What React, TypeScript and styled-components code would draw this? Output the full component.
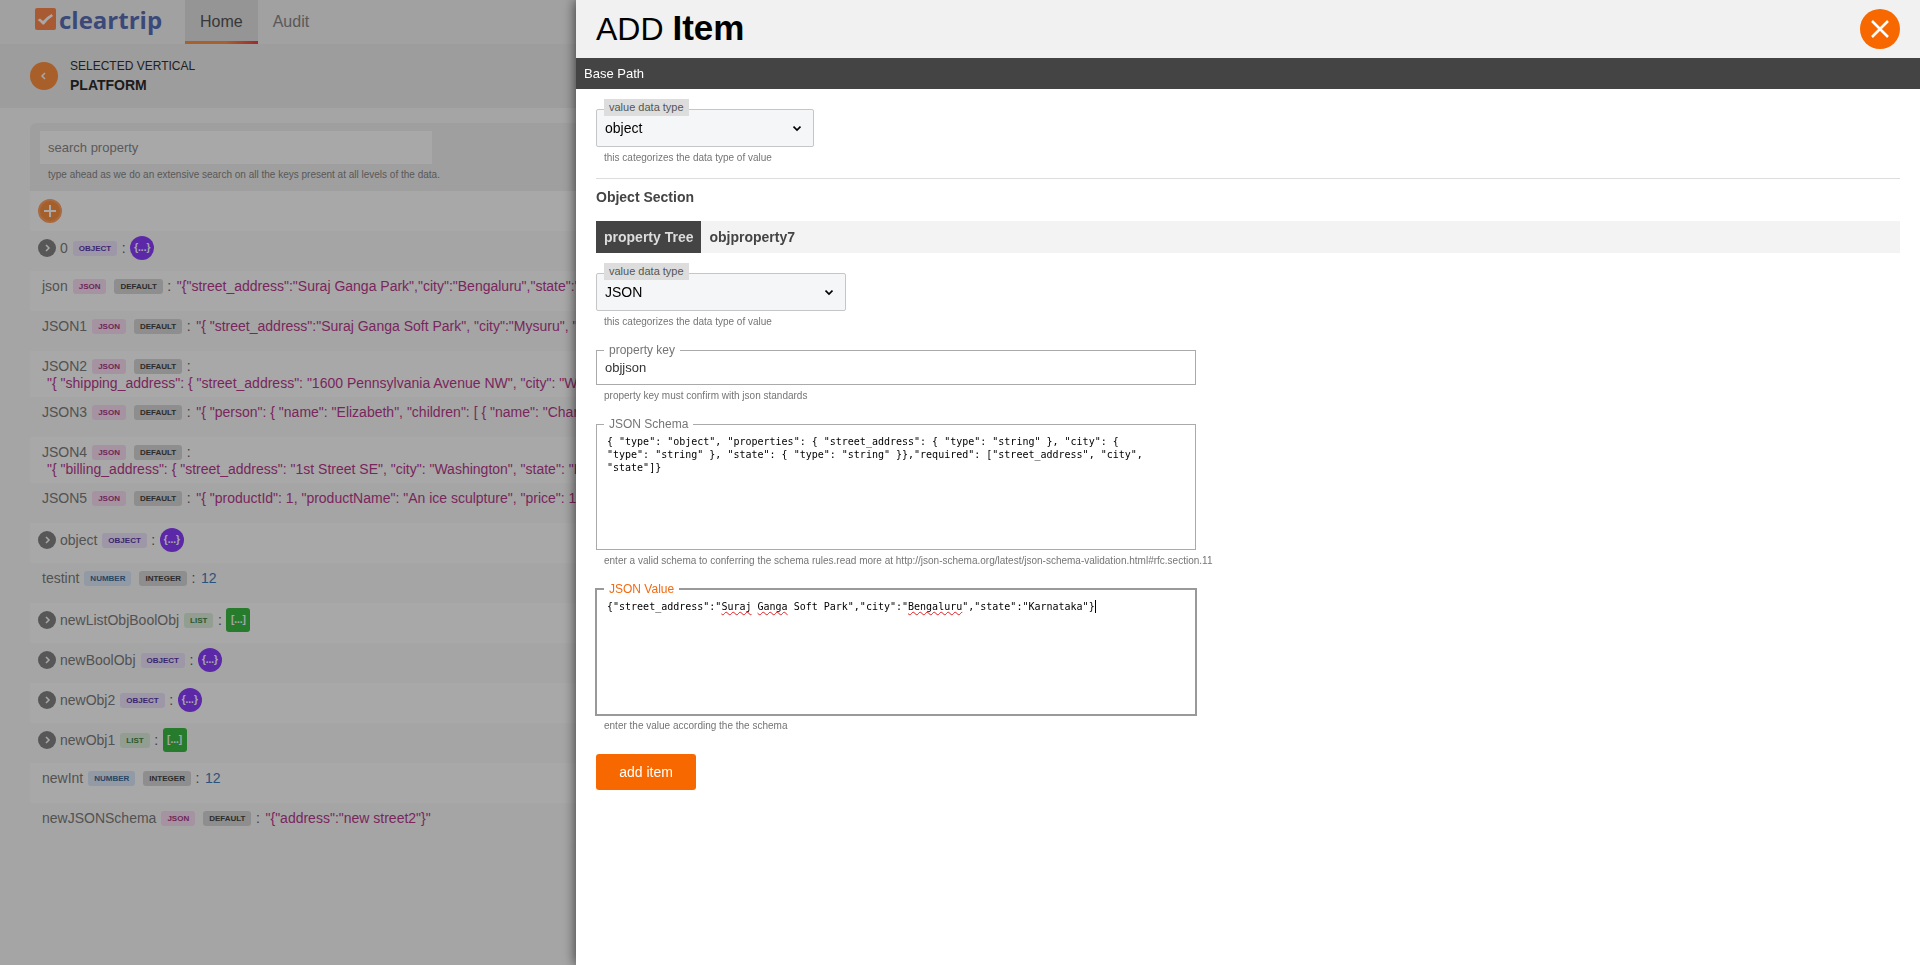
import React from "react";
import styled, { createGlobalStyle, css } from "styled-components";

const GlobalStyle = createGlobalStyle`
  *, *::before, *::after { box-sizing: border-box; }
  body {
    margin: 0;
    background: #fafafa;
    font-family: "Liberation Sans", Arial, sans-serif;
    font-size: 14px;
    overflow: hidden;
  }
  button, input, select, textarea { font-family: inherit; }
`;

/* ---------- page behind the drawer ---------- */

const Page = styled.div`
  min-height: 100vh;
`;

const TopBar = styled.header`
  display: flex;
  align-items: stretch;
  height: 44px;
  padding-left: 35px;
  background: #f4f4f4;
`;

const Logo = styled.a`
  display: flex;
  gap: 3px;
  width: 150px;
  color: #5870b8;
  font: 700 24px/40px "Open Sans", "Noto Sans", sans-serif;
  text-decoration: none;
  svg { display: block; margin-top: 8px; flex: none; }
`;

const Tab = styled.a<{ $active?: boolean }>`
  display: flex;
  align-items: center;
  padding: 2px 15px 0;
  font-size: 16px;
  text-decoration: none;
  color: #888;
  border-bottom: 3px solid transparent;
  ${(p) =>
    p.$active &&
    css`
      color: #555;
      background: #e2e2e2;
      border-image: linear-gradient(to right, #ff9344 55%, #f43c46) 1;
    `}
`;

const SubHeader = styled.div`
  display: flex;
  align-items: center;
  gap: 12px;
  height: 64px;
  padding-left: 30px;
  background: #efefef;
`;

const RoundButton = styled.button<{ $size: number; $bg: string; $ring?: string }>`
  display: flex;
  align-items: center;
  justify-content: center;
  flex: none;
  width: ${(p) => p.$size}px;
  height: ${(p) => p.$size}px;
  padding: 0;
  border: ${(p) => (p.$ring ? `2px solid ${p.$ring}` : "0")};
  border-radius: 50%;
  background: ${(p) => p.$bg};
  color: #fff;
`;

const Vertical = styled.div`
  font-size: 12px;
  line-height: 19px;
  color: #333;
  strong { display: block; font-size: 14px; color: #2b2b2b; }
`;

const Card = styled.main`
  margin: 15px 30px 0;
  border-radius: 6px 6px 0 0;
  background: #fff;
  overflow: hidden;
`;

const SearchArea = styled.div`
  height: 68px;
  padding: 8px 10px;
  background: #f2f2f2;
`;

const SearchInput = styled.input`
  display: block;
  width: 392px;
  height: 33px;
  padding: 0 8px;
  border: 0;
  background: #fff;
  font-size: 13px;
  &::placeholder { color: #8a8a8a; opacity: 1; }
`;

const SearchHint = styled.label`
  display: block;
  padding: 4px 8px 0;
  font-size: 10px;
  line-height: 13px;
  color: #888;
`;

const AddRow = styled.div`
  display: flex;
  align-items: center;
  height: 40px;
  padding-left: 8px;
`;

const List = styled.ul`
  margin: 0;
  padding: 0;
  list-style: none;
`;

const Item = styled.li<{ $branch: boolean }>`
  min-height: 40px;
  padding: ${(p) => (p.$branch ? "5px 8px" : "7px 12px 5px")};
  white-space: nowrap;
  color: #7d7d7d;
  &:nth-child(odd) { background: #fbfbfb; }
`;

const Line = styled.div<{ $branch?: boolean }>`
  display: flex;
  align-items: center;
  height: ${(p) => (p.$branch ? 24 : 17)}px;
  line-height: 17px;
`;

const Key = styled.span<{ $branch: boolean }>`
  margin-left: ${(p) => (p.$branch ? 4 : 0)}px;
`;

const tones = {
  OBJECT: ["#efe6ff", "#5a3aa8"],
  JSON: ["#fbdff5", "#a83a84"],
  LIST: ["#def0de", "#3f8848"],
  NUMBER: ["#dceafa", "#3c6c98"],
  META: ["#d8d8d8", "#444"],
} as const;

type Tone = keyof typeof tones;

const Badge = styled.span<{ $tone: Tone }>`
  margin-left: ${(p) => (p.$tone === "META" ? 8 : 5)}px;
  padding: 0 6px;
  border-radius: 3px;
  font-size: 8px;
  font-weight: 700;
  line-height: 15px;
  background: ${(p) => tones[p.$tone][0]};
  color: ${(p) => tones[p.$tone][1]};
`;

const Colon = styled.span`
  width: 13px;
  text-align: center;
  color: #5f5f5f;
`;

const Value = styled.span<{ $number?: boolean }>`
  margin-left: 1px;
  color: ${(p) => (p.$number ? "#3f7fc0" : "#b83a8e")};
`;

const Wrapped = styled.div`
  padding-left: 4px;
  line-height: 17px;
`;

const Chip = styled.button<{ $list: boolean }>`
  width: 24px;
  height: 24px;
  padding: 0;
  border: 0;
  border-radius: ${(p) => (p.$list ? "3px" : "50%")};
  background: ${(p) => (p.$list ? "#3abd44" : "#8b3dff")};
  color: #fff;
  font-size: 10px;
  font-weight: 700;
  line-height: 24px;
`;

/* ---------- drawer ---------- */

const Backdrop = styled.div`
  position: fixed;
  inset: 0;
  background: rgba(0, 0, 0, 0.34);
`;

const Drawer = styled.aside`
  position: fixed;
  top: 0;
  right: 0;
  bottom: 0;
  width: 70%;
  background: #fff;
  box-shadow: 0 0 12px rgba(0, 0, 0, 0.7);
  overflow: auto;
`;

const DrawerHeader = styled.header`
  display: flex;
  align-items: center;
  justify-content: space-between;
  height: 58px;
  padding: 0 20px;
  background: #f1f1f1;
`;

const Title = styled.h1`
  margin: 0;
  padding-bottom: 2px;
  font-size: 32px;
  font-weight: 400;
  line-height: 40px;
  color: #000;
  strong { font-size: 35px; }
`;

const PathBar = styled.div`
  padding: 0 8px;
  font-size: 13px;
  line-height: 31px;
  color: #fff;
  background: #444;
`;

const Form = styled.form`
  padding: 10px 20px;
`;

const SelectField = styled.div<{ $width: number }>`
  display: flex;
  flex-direction: column;
  align-items: flex-start;
  width: ${(p) => p.$width}px;
`;

const SelectLabel = styled.label`
  z-index: 1;
  margin: 0 0 -7px 8px;
  padding: 0 5px;
  font-size: 11px;
  line-height: 17px;
  color: #555;
  background: #ddd;
`;

const SelectBox = styled.div`
  display: grid;
  align-items: center;
  width: 100%;
  > * { grid-area: 1 / 1; }
  svg { justify-self: end; margin-right: 13px; pointer-events: none; }
`;

const Select = styled.select`
  appearance: none;
  width: 100%;
  height: 38px;
  padding: 0 8px;
  border: 1px solid #c4c6c8;
  border-radius: 2px;
  background: #f5f6f8;
  font-size: 14px;
  color: #000;
`;

const Hint = styled.p`
  margin: 5px 0 0 8px;
  font-size: 10px;
  line-height: 11px;
  white-space: nowrap;
  color: #757575;
`;

const Divider = styled.hr`
  margin: 15px 0 0;
  border: 0;
  border-top: 1px solid #ddd;
`;

const SectionTitle = styled.h2`
  margin: 10px 0 16px;
  font-size: 14px;
  line-height: 16px;
  color: #444;
`;

const TreeBar = styled.div`
  display: flex;
  margin-bottom: 10px;
  font-weight: 700;
  line-height: 32px;
  color: #444;
  background: #f3f3f3;
`;

const TreeTag = styled.span`
  margin-right: 8px;
  padding: 0 8px;
  color: #ddd;
  background: #444;
`;

const Field = styled.div`
  width: 600px;
  max-width: 100%;
  margin-top: 16px;
`;

const Outline = styled.fieldset<{ $focused?: boolean }>`
  display: grid;
  min-width: 0;
  margin: ${(p) => (p.$focused ? "0 -1px -1px" : "0")};
  padding: 0 7px;
  border: ${(p) => (p.$focused ? "2px solid #999" : "1px solid #aaa")};
  legend {
    padding: 0 5px;
    font-size: 12px;
    line-height: 14px;
    color: ${(p) => (p.$focused ? "#f26a10" : "#757575")};
  }
  > :not(legend) { grid-area: 1 / 1; }
`;

const TextInput = styled.input`
  width: 100%;
  height: 27px;
  padding: 0 1px 6px;
  border: 0;
  outline: 0;
  background: transparent;
  font-size: 13px;
  color: #333;
`;

const editorText = css`
  width: 100%;
  height: 118px;
  margin: 0;
  padding: 4px 3px;
  border: 0;
  outline: 0;
  background: transparent;
  font-family: "DejaVu Sans Mono", monospace;
  font-size: 10px;
  line-height: 13px;
  white-space: pre-wrap;
`;

const Editor = styled.textarea`
  ${editorText}
  display: block;
  resize: none;
  color: #000;
`;

const SpellLayer = styled.div`
  ${editorText}
  color: transparent;
  pointer-events: none;
  u { text-decoration: underline wavy #e02020 1px; text-underline-offset: 1px; text-decoration-skip-ink: none; }
`;

const Caret = styled.i`
  display: inline-block;
  width: 1px;
  height: 13px;
  vertical-align: bottom;
  background: #000;
`;

const Submit = styled.button`
  display: block;
  width: 100px;
  height: 36px;
  margin-top: 23px;
  border: 0;
  border-radius: 3px;
  background: #f86800;
  color: #fff;
  font-size: 14px;
`;

/* ---------- data ---------- */

type Entry = { key: string; type: Exclude<Tone, "META">; meta?: string; value?: string; wrap?: boolean };

const entries: Entry[] = [
  { key: "0", type: "OBJECT" },
  { key: "json", type: "JSON", meta: "DEFAULT", value: '"{"street_address":"Suraj Ganga Park","city":"Bengaluru","state":""}' },
  { key: "JSON1", type: "JSON", meta: "DEFAULT", value: '"{ "street_address":"Suraj Ganga Soft Park", "city":"Mysuru", ""}"' },
  { key: "JSON2", type: "JSON", meta: "DEFAULT", wrap: true, value: '"{ "shipping_address": { "street_address": "1600 Pennsylvania Avenue NW", "city": "WA"}"' },
  { key: "JSON3", type: "JSON", meta: "DEFAULT", value: '"{ "person": { "name": "Elizabeth", "children": [ { "name": "Charles"}"' },
  { key: "JSON4", type: "JSON", meta: "DEFAULT", wrap: true, value: '"{ "billing_address": { "street_address": "1st Street SE", "city": "Washington", "state": "DC"}"' },
  { key: "JSON5", type: "JSON", meta: "DEFAULT", value: '"{ "productId": 1, "productName": "An ice sculpture", "price": 12.5 }"' },
  { key: "object", type: "OBJECT" },
  { key: "testint", type: "NUMBER", meta: "INTEGER", value: "12" },
  { key: "newListObjBoolObj", type: "LIST" },
  { key: "newBoolObj", type: "OBJECT" },
  { key: "newObj2", type: "OBJECT" },
  { key: "newObj1", type: "LIST" },
  { key: "newInt", type: "NUMBER", meta: "INTEGER", value: "12" },
  { key: "newJSONSchema", type: "JSON", meta: "DEFAULT", value: '"{"address":"new street2"}"' },
];

const schema =
  '{ "type": "object", "properties": { "street_address": { "type": "string" }, "city": {\n"type": "string" }, "state": { "type": "string" }},"required": ["street_address", "city",\n"state"]}';
const json = '{"street_address":"Suraj Ganga Soft Park","city":"Bengaluru","state":"Karnataka"}';
const unknownWords = /(Suraj|Ganga|Bengaluru)/;

/* ---------- parts ---------- */

const Stroke = ({ d, size, width }: { d: string; size: number; width: number }) => (
  <svg width={size} height={size} viewBox={`0 0 ${size} ${size}`} fill="none" stroke="currentColor" strokeWidth={width} aria-hidden="true">
    <path d={d} />
  </svg>
);

function PropertyRow({ entry }: { entry: Entry }) {
  const branch = entry.type === "OBJECT" || entry.type === "LIST";
  return (
    <Item $branch={branch}>
      <Line $branch={branch}>
        {branch && (
          <RoundButton $size={18} $bg="#848484" aria-label={`expand ${entry.key}`}>
            <Stroke size={8} width={1.5} d="M3 1l3 3-3 3" />
          </RoundButton>
        )}
        <Key $branch={branch}>{entry.key}</Key>
        <Badge $tone={entry.type}>{entry.type}</Badge>
        {entry.meta && <Badge $tone="META">{entry.meta}</Badge>}
        <Colon>:</Colon>
        {branch && <Chip $list={entry.type === "LIST"}>{entry.type === "LIST" ? "[...]" : "{...}"}</Chip>}
        {entry.value && !entry.wrap && <Value $number={entry.type === "NUMBER"}>{entry.value}</Value>}
      </Line>
      {entry.wrap && (
        <Wrapped>
          <Value>{entry.value}</Value>
        </Wrapped>
      )}
    </Item>
  );
}

function TypeSelect({ id, value, width }: { id: string; value: string; width: number }) {
  return (
    <SelectField $width={width}>
      <SelectLabel htmlFor={id}>value data type</SelectLabel>
      <SelectBox>
        <Select id={id} defaultValue={value}>
          <option>{value}</option>
        </Select>
        <Stroke size={8} width={1.7} d="M0.5 2.5L4 6l3.5-3.5" />
      </SelectBox>
      <Hint>this categorizes the data type of value</Hint>
    </SelectField>
  );
}

export default function App() {
  return (
    <>
      <GlobalStyle />
      <Page>
        <TopBar>
          <Logo href="#">
            <svg width="21" height="22" viewBox="0 0 21 22" aria-hidden="true">
              <rect width="21" height="22" rx="2" fill="#ff8a4c" />
              <path d="M2.500 12l2.500-1.500 3 2.500Q12 8.500 16.500 6l1.500 2Q12.500 11.500 9 16.500H7.500Q5.500 13.500 2.500 12z" fill="#fff" />
            </svg>
            cleartrip
          </Logo>
          <Tab href="#" $active>Home</Tab>
          <Tab href="#">Audit</Tab>
        </TopBar>
        <SubHeader>
          <RoundButton $size={28} $bg="#ff9040" aria-label="back">
            <Stroke size={8} width={1.5} d="M5 1L2 4l3 3" />
          </RoundButton>
          <Vertical>
            SELECTED VERTICAL
            <strong>PLATFORM</strong>
          </Vertical>
        </SubHeader>
        <Card>
          <SearchArea>
            <SearchInput id="search" placeholder="search property" />
            <SearchHint htmlFor="search">
              type ahead as we do an extensive search on all the keys present at all levels of the data.
            </SearchHint>
          </SearchArea>
          <AddRow>
            <RoundButton $size={24} $bg="#fb9040" $ring="#ffa266" aria-label="add">
              <Stroke size={12} width={2} d="M6 0v12M0 6h12" />
            </RoundButton>
          </AddRow>
          <List>
            {entries.map((entry) => (
              <PropertyRow key={entry.key} entry={entry} />
            ))}
          </List>
        </Card>
      </Page>
      <Backdrop />
      <Drawer>
        <DrawerHeader>
          <Title>ADD <strong>Item</strong></Title>
          <RoundButton $size={40} $bg="#f86800" aria-label="close">
            <Stroke size={18} width={2.5} d="M1 1l16 16M17 1L1 17" />
          </RoundButton>
        </DrawerHeader>
        <PathBar>Base Path</PathBar>
        <Form>
          <TypeSelect id="base-type" value="object" width={218} />
          <Divider />
          <SectionTitle>Object Section</SectionTitle>
          <TreeBar>
            <TreeTag>property Tree</TreeTag>
            objproperty7
          </TreeBar>
          <TypeSelect id="item-type" value="JSON" width={250} />
          <Field>
            <Outline>
              <legend><label htmlFor="key">property key</label></legend>
              <TextInput id="key" defaultValue="objjson" />
            </Outline>
            <Hint>property key must confirm with json standards</Hint>
          </Field>
          <Field>
            <Outline>
              <legend><label htmlFor="schema">JSON Schema</label></legend>
              <Editor id="schema" spellCheck={false} defaultValue={schema} />
            </Outline>
            <Hint>
              enter a valid schema to conferring the schema rules.read more at
              http://json-schema.org/latest/json-schema-validation.html#rfc.section.11
            </Hint>
          </Field>
          <Field>
            <Outline $focused>
              <legend><label htmlFor="value">JSON Value</label></legend>
              <Editor id="value" spellCheck={false} defaultValue={json} />
              <SpellLayer aria-hidden="true">
                {json.split(unknownWords).map((part, i) => (i % 2 ? <u key={i}>{part}</u> : part))}
                <Caret />
              </SpellLayer>
            </Outline>
            <Hint>enter the value according the the schema</Hint>
          </Field>
          <Submit type="button">add item</Submit>
        </Form>
      </Drawer>
    </>
  );
}
